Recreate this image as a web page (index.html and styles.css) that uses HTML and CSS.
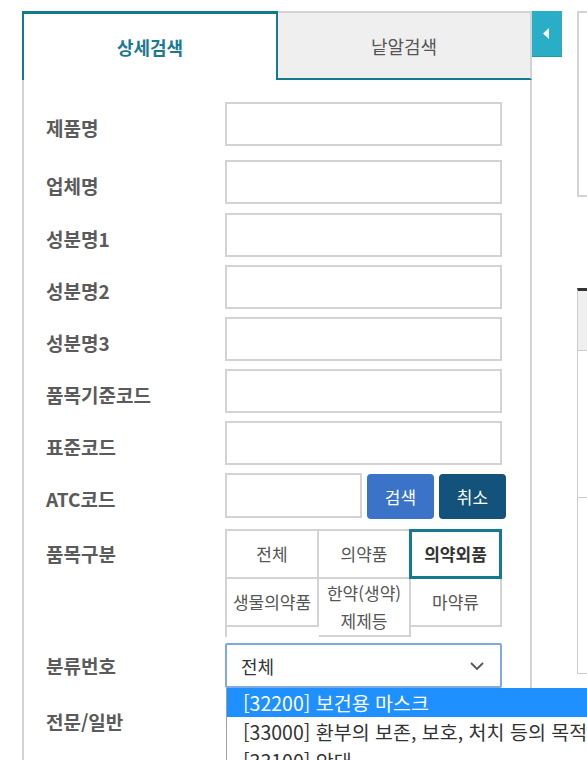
FILE: index.html
```html
<!DOCTYPE html>
<html lang="ko">
<head>
<meta charset="utf-8">
<title>상세검색</title>
<link rel="stylesheet" href="styles.css">
</head>
<body>
<div class="page">
  <div class="panel">
    <div class="tabs">
      <div class="tab active">상세검색</div>
      <div class="tab idle">낱알검색</div>
    </div>
    <div class="body">
      <div class="row r1"><span class="lbl">제품명</span><div class="input"></div></div>
      <div class="row r2"><span class="lbl">업체명</span><div class="input"></div></div>
      <div class="row"><span class="lbl">성분명1</span><div class="input"></div></div>
      <div class="row"><span class="lbl">성분명2</span><div class="input"></div></div>
      <div class="row"><span class="lbl">성분명3</span><div class="input"></div></div>
      <div class="row"><span class="lbl">품목기준코드</span><div class="input"></div></div>
      <div class="row"><span class="lbl">표준코드</span><div class="input"></div></div>
      <div class="row atc">
        <span class="lbl">ATC코드</span>
        <div class="input small"></div>
        <div class="btn search">검색</div>
        <div class="btn cancel">취소</div>
      </div>
      <div class="row grid-row">
        <span class="lbl top">품목구분</span>
        <div class="chips">
          <div class="chip">전체</div>
          <div class="chip">의약품</div>
          <div class="chip on">의약외품</div>
          <div class="chip">생물의약품</div>
          <div class="chip tall">한약(생약)<br>제제등</div>
          <div class="chip">마약류</div>
        </div>
      </div>
      <div class="row sel-row">
        <span class="lbl">분류번호</span>
        <div class="select-wrap">
          <div class="select">
            <span>전체</span>
            <svg class="chev" width="14" height="8" viewBox="0 0 14 8"><path d="M1 1 L7 7 L13 1" fill="none" stroke="#555" stroke-width="1.8"/></svg>
          </div>
          <div class="dropdown">
            <div class="opt hl">[32200] 보건용 마스크</div>
            <div class="opt">[33000] 환부의 보존, 보호, 처치 등의 목적</div>
            <div class="opt">[33100] 안대</div>
          </div>
        </div>
      </div>
      <div class="row"><span class="lbl">전문/일반</span><div class="spacer"></div></div>
    </div>
  </div>
  <div class="toggle">
    <svg width="30" height="46" viewBox="0 0 30 46"><path d="M17 17 L17 28 L11 22.5 Z" fill="#fff"/></svg>
  </div>
  <div class="right">
    <div class="box"></div>
    <div class="table">
      <div class="th"></div>
      <div class="tr tr1"></div>
      <div class="tr tr2"></div>
    </div>
  </div>
</div>
</body>
</html>
```
FILE: styles.css
```css
html, body {
  margin: 0;
  padding: 0;
  overflow: hidden;
  background: #fff;
}
body {
  width: 587px;
  height: 760px;
  font-family: "Noto Sans CJK KR", "Noto Sans", sans-serif;
}
.page {
  display: flex;
  align-items: flex-start;
  padding: 11px 0 0 22px;
  height: 749px;
}
.panel {
  flex: none;
  width: 510px;
  height: 749px;
  display: flex;
  flex-direction: column;
}
.tabs {
  display: flex;
  height: 69px;
  flex: none;
}
.tab {
  flex: 1;
  box-sizing: border-box;
  display: flex;
  align-items: center;
  justify-content: center;
  font-size: 18px;
}
.tab.active {
  border: solid #137a92;
  border-width: 3px 2px 0 2px;
  color: #1b7a93;
  font-weight: bold;
}
.tab.idle {
  background: #efefef;
  border-top: 2px solid #d3d3d3;
  border-right: 2px solid #d3d3d3;
  border-bottom: 2px solid #137a92;
  color: #555;
}
.body {
  flex: 1;
  border-left: 2px solid #d3d3d3;
  border-right: 2px solid #d3d3d3;
  padding: 22px 28px 0 22px;
}
.row {
  display: flex;
  align-items: center;
  margin-bottom: 8px;
}
.r1 { margin-bottom: 14px; }
.r2 { margin-bottom: 9px; }
.lbl {
  flex: none;
  width: 179px;
  font-size: 19px;
  font-weight: bold;
  color: #5b5b5b;
  line-height: 24px;
  padding-top: 7px;
}
.input {
  flex: none;
  width: 277px;
  height: 44px;
  box-sizing: border-box;
  border: 2px solid #d3d3d3;
  background: #fff;
}
.input.small { width: 137px; height: 45px; }
.atc { margin-bottom: 10px; align-items: flex-start; }
.atc .lbl { padding-top: 14px; }
.btn {
  flex: none;
  width: 67px;
  height: 45px;
  margin-left: 5px;
  margin-top: 1px;
  border-radius: 4px;
  color: #fff;
  font-size: 17px;
  display: flex;
  align-items: center;
  justify-content: center;
}
.btn.search { background: #3a73c7; }
.btn.cancel { background: #13537b; }
.grid-row {
  align-items: flex-start;
  margin-bottom: 6px;
}
.lbl.top {
  padding-top: 0;
  line-height: 50px;
}
.chips {
  flex: none;
  width: 277px;
  box-sizing: border-box;
  display: flex;
  flex-wrap: wrap;
  align-items: flex-start;
  border-top: 2px solid #d3d3d3;
  border-left: 2px solid #d3d3d3;
}
.chip {
  box-sizing: border-box;
  width: 92px;
  min-height: 48px;
  border-right: 2px solid #d3d3d3;
  border-bottom: 2px solid #d3d3d3;
  display: flex;
  align-items: center;
  justify-content: center;
  text-align: center;
  font-size: 17px;
  line-height: 28px;
  color: #555;
}
.chip:nth-child(3n) { width: 91px; }
.chip.tall { padding: 0; }
.chip.on {
  position: relative;
  font-weight: bold;
  color: #333;
}
.chip.on::after {
  content: "";
  position: absolute;
  top: -2px;
  left: -2px;
  right: -2px;
  bottom: -2px;
  border: 3px solid #137a92;
}
.sel-row .lbl { padding-top: 0; }
.select-wrap {
  flex: none;
  position: relative;
  width: 277px;
}
.select {
  height: 45px;
  box-sizing: border-box;
  border: 2px solid #7ea9e2;
  border-radius: 2px;
  padding: 0 16px 0 14px;
  display: flex;
  align-items: center;
  justify-content: space-between;
  font-size: 18px;
  color: #333;
}
.dropdown {
  position: absolute;
  top: 100%;
  left: 1px;
  width: 420px;
  background: #fff;
  border-left: 1px solid #a0a0a0;
  z-index: 5;
}
.opt {
  padding-left: 16px;
  font-size: 19.5px;
  line-height: 29px;
  color: #333;
  white-space: nowrap;
}
.opt.hl {
  background: #1e90ff;
  color: #fff;
}
.spacer { flex: none; width: 277px; height: 44px; }
.toggle {
  flex: none;
  width: 30px;
  height: 46px;
  background: #2aaec7;
  box-sizing: border-box;
  border-bottom: 1px solid #2399b0;
}
.toggle svg { display: block; }
.right {
  flex: none;
  width: 60px;
  margin-left: 15px;
}
.box {
  height: 186px;
  box-sizing: border-box;
  border: 2px solid #d3d3d3;
}
.table {
  margin-top: 91px;
  border-top: 3px solid #333;
  border-left: 1px solid #ccc;
}
.th {
  height: 59px;
  background: #efefef;
  border-bottom: 1px solid #ccc;
}
.tr { border-bottom: 1px solid #ccc; }
.tr1 { height: 146px; }
.tr2 { height: 175px; }
```
